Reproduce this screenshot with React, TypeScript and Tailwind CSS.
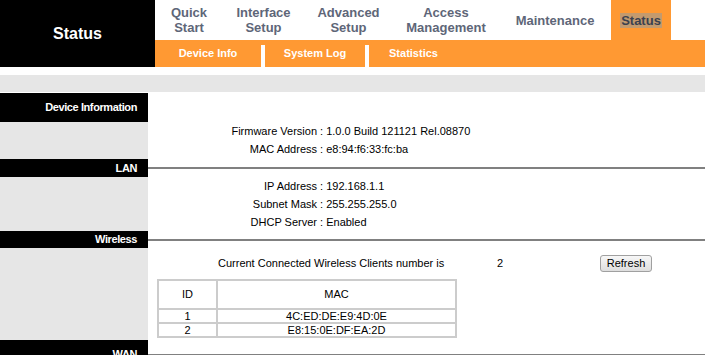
import React from "react";

const topTabs = [
  { label: ["Quick", "Start"], w: "w-[68px]" },
  { label: ["Interface", "Setup"], w: "w-[81px]" },
  { label: ["Advanced", "Setup"], w: "w-[89px]" },
  { label: ["Access", "Management"], w: "w-[106px]" },
  { label: ["Maintenance"], w: "w-[112px]" },
];

function Section({
  title,
  headerH,
  bodyH,
  line = true,
  children,
}: {
  title: string;
  headerH: string;
  bodyH: string;
  line?: boolean;
  children?: React.ReactNode;
}) {
  return (
    <div className="flex">
      <div className="w-[148px] shrink-0 flex flex-col">
        <div
          className={`${headerH} bg-black text-white font-bold text-[11px] tracking-[-0.4px] flex items-center justify-end pr-[11px]`}
        >
          {title}
        </div>
        <div className={`${bodyH} bg-[#e6e6e6]`} />
      </div>
      <div className="flex-1 flex flex-col">
        <div className={`${headerH} flex items-center`}>
          {line && <div className="h-[2px] w-full bg-[#808080]" />}
        </div>
        <div className={bodyH}>{children}</div>
      </div>
    </div>
  );
}

function InfoRow({ label, value }: { label: string; value: string }) {
  return (
    <div className="flex items-center h-[18px] text-[11px] text-black">
      <span className="w-[169px] text-right">{label}</span>
      <span className="whitespace-pre"> : </span>
      <span>{value}</span>
    </div>
  );
}

export default function App() {
  return (
    <div className="w-[705px] bg-white font-['Liberation_Sans',Arial,sans-serif]">
      {/* header */}
      <div className="flex h-[67px]">
        <div className="w-[155px] shrink-0 bg-black text-white font-bold text-[16px] flex items-center justify-center">
          Status
        </div>
        <div className="flex-1 flex flex-col">
          <div className="h-[40px] flex bg-white">
            {topTabs.map((t) => (
              <div
                key={t.label.join(" ")}
                className={`${t.w} flex flex-col items-center justify-center text-[13px] leading-[15px] font-bold text-[#5e6678]`}
              >
                {t.label.map((l) => (
                  <span key={l}>{l}</span>
                ))}
              </div>
            ))}
            <div className="w-[60px] bg-[#ff9933] flex items-center justify-center">
              <span className="bg-[#c39a6e] text-[13px] leading-[15px] font-bold text-[#3a4150] px-[1px]">
                Status
              </span>
            </div>
          </div>
          <div className="h-[27px] bg-[#ff9933] flex text-white font-bold text-[11px]">
            <div className="w-[106px] flex items-center justify-center">Device Info</div>
            <div className="w-[4px] h-[22px] mt-[5px] bg-white" />
            <div className="w-[100px] flex items-center justify-center">System Log</div>
            <div className="w-[4px] h-[22px] mt-[5px] bg-white" />
            <div className="w-[89px] flex items-center justify-center">Statistics</div>
          </div>
        </div>
      </div>

      <div className="h-[17px] mt-[8px] mb-[1px] bg-[#e6e6e6]" />

      <Section title="Device Information" headerH="h-[29px]" bodyH="h-[37px]" line={false}>
        <InfoRow label="Firmware Version" value="1.0.0 Build 121121 Rel.08870" />
        <InfoRow label="MAC Address" value="e8:94:f6:33:fc:ba" />
      </Section>

      <Section title="LAN" headerH="h-[18px]" bodyH="h-[54px]">
        <InfoRow label="IP Address" value="192.168.1.1" />
        <InfoRow label="Subnet Mask" value="255.255.255.0" />
        <InfoRow label="DHCP Server" value="Enabled" />
      </Section>

      <Section title="Wireless" headerH="h-[17px]" bodyH="h-[92px]">
        <div className="pt-[7px] text-[11px] text-black">
          <div className="flex items-center h-[17px]">
            <span className="ml-[70px] w-[279px]">Current Connected Wireless Clients number is</span>
            <span className="w-[103px]">2</span>
            <button
              type="button"
              className="h-[17px] w-[52px] border border-[#a0a0a0] rounded-[3px] bg-gradient-to-b from-[#f7f7f7] to-[#dedede] text-[11px] text-black leading-none"
            >
              Refresh
            </button>
          </div>
          <div className="mt-[7px] ml-[9px] w-[300px] grid grid-cols-[57px_237px] gap-[2px] p-[2px] bg-[#cccccc] text-center">
            <div className="h-[27px] bg-white flex items-center justify-center">ID</div>
            <div className="h-[27px] bg-white flex items-center justify-center">MAC</div>
            <div className="h-[12px] bg-white leading-[12px]">1</div>
            <div className="h-[12px] bg-white leading-[12px]">4C:ED:DE:E9:4D:0E</div>
            <div className="h-[12px] bg-white leading-[12px]">2</div>
            <div className="h-[12px] bg-white leading-[12px]">E8:15:0E:DF:EA:2D</div>
          </div>
        </div>
      </Section>

      <Section title="WAN" headerH="h-[29px]" bodyH="h-[60px]" />
    </div>
  );
}
